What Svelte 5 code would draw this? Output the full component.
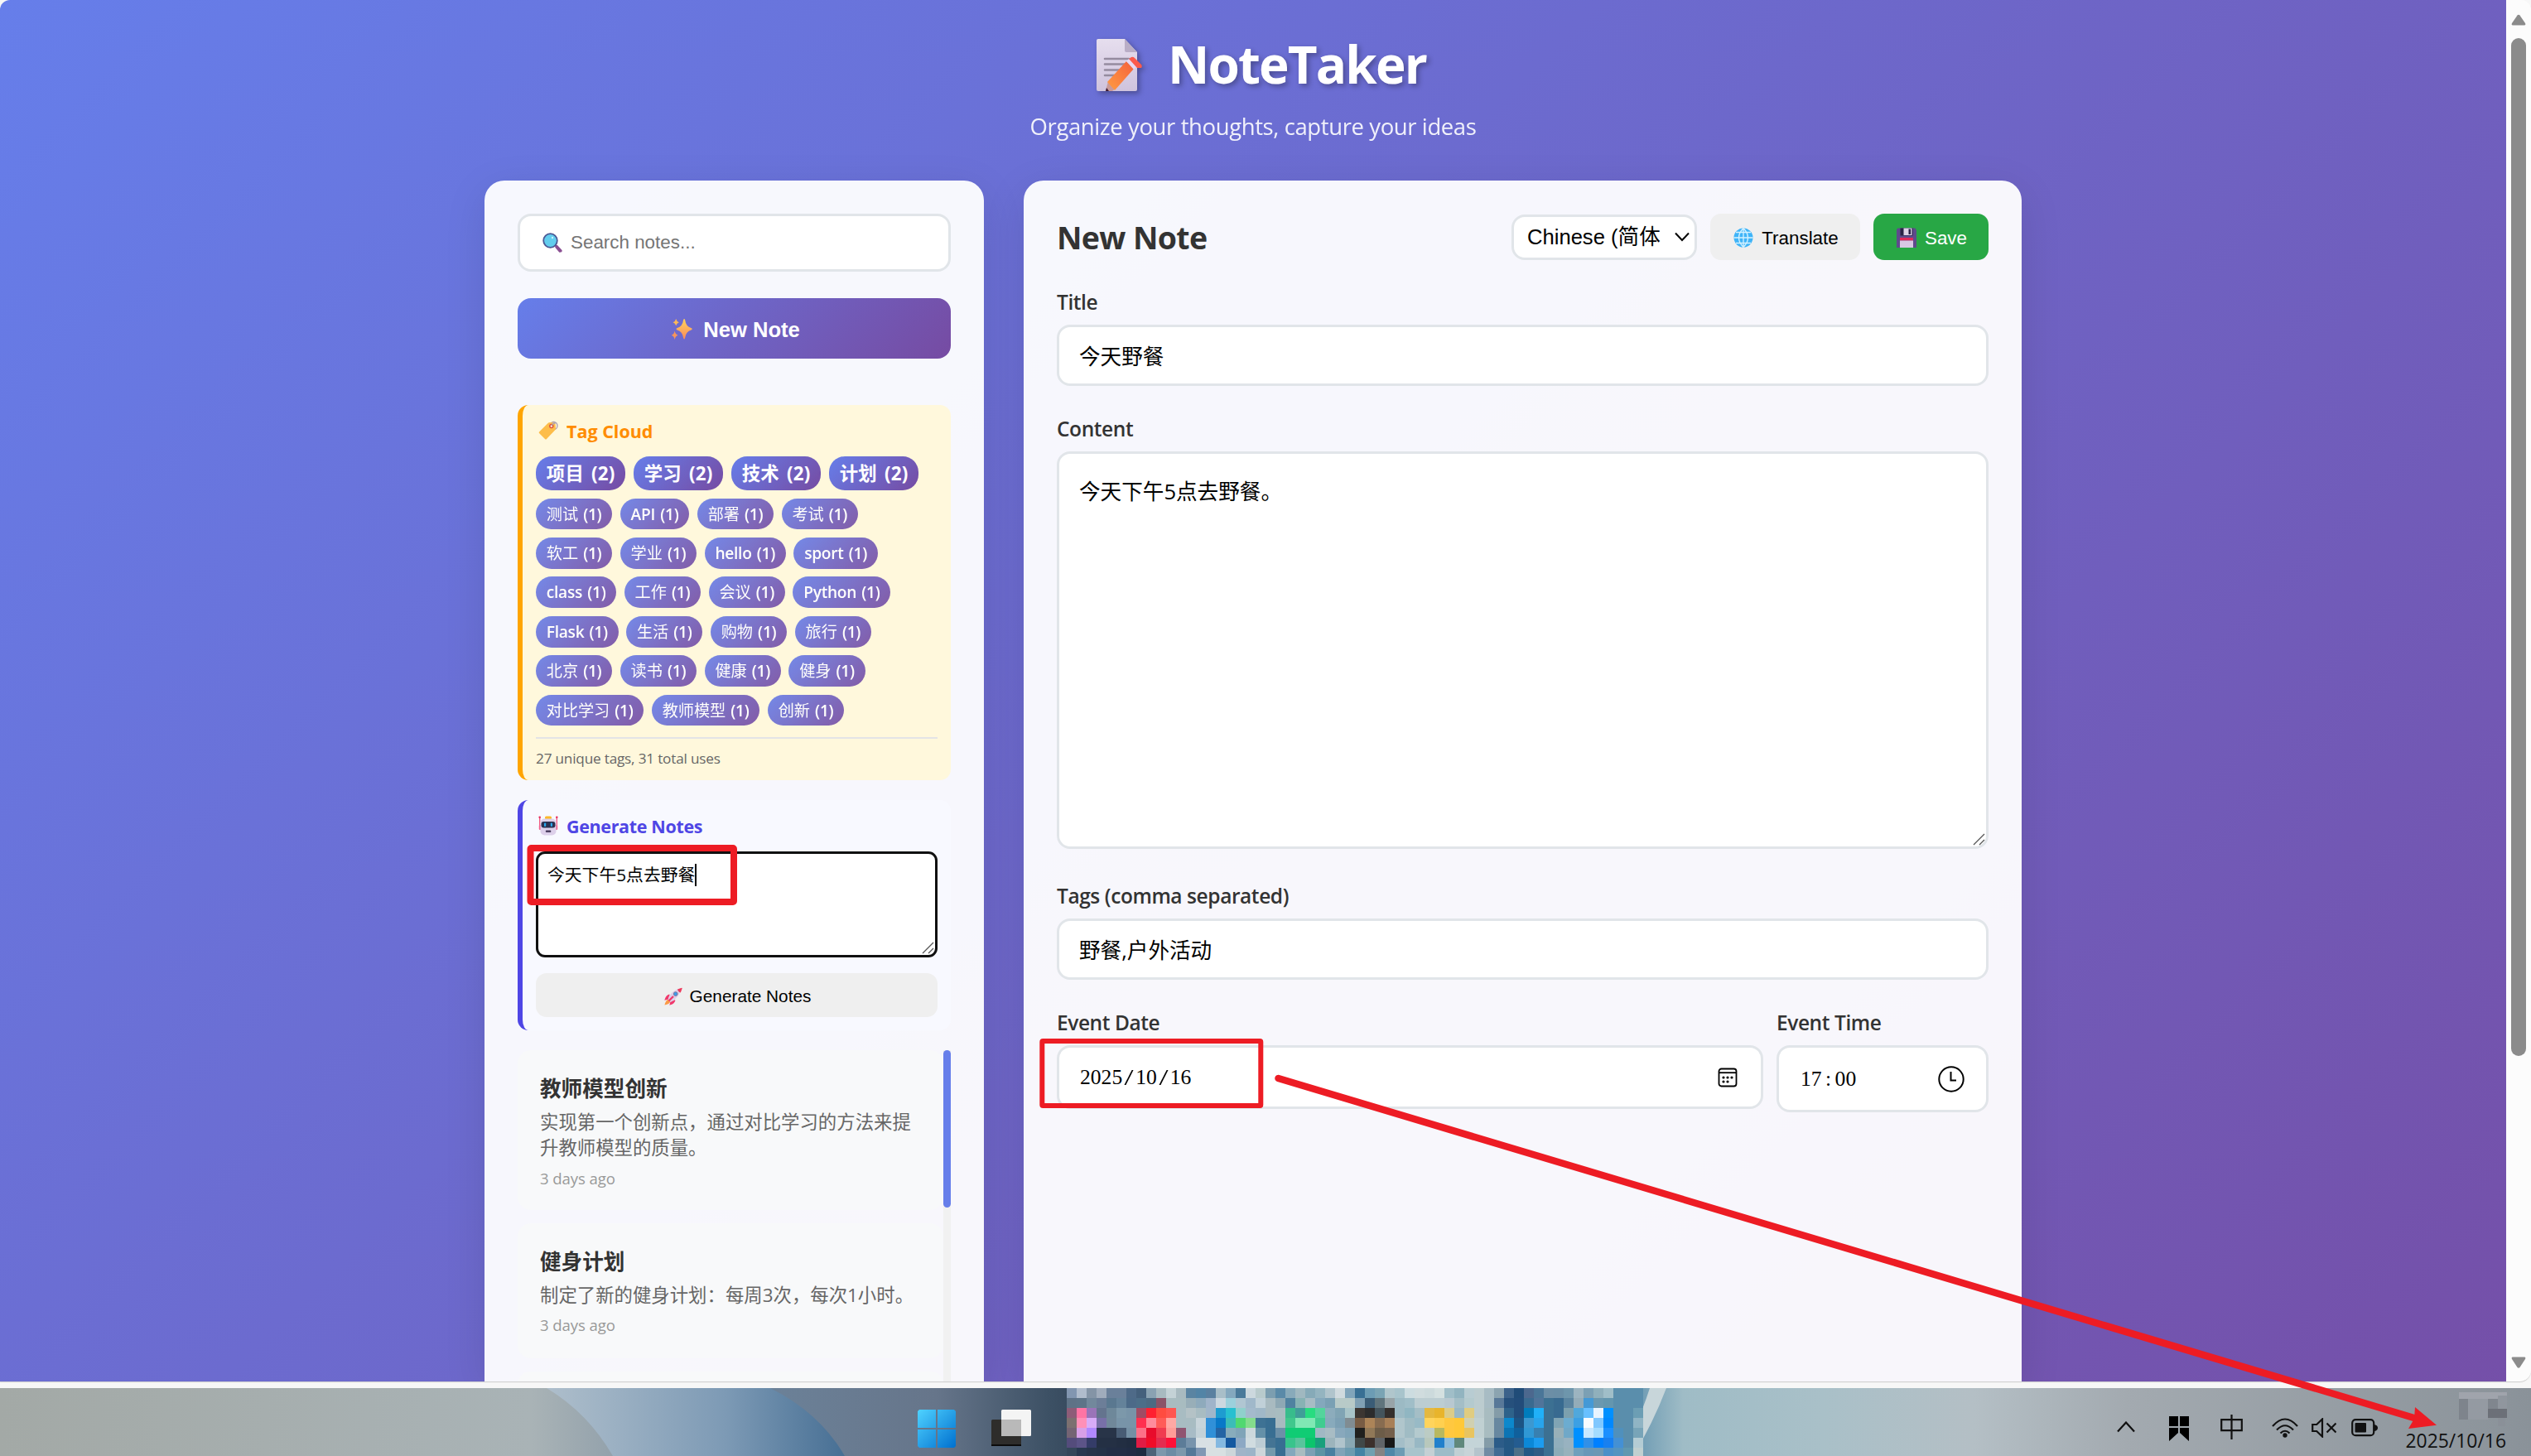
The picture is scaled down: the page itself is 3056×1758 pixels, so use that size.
<script>
  const bigTags = ['项目', '学习', '技术', '计划'];
  const smallTags = [
    '测试', 'API', '部署', '考试', '软工', '学业', 'hello', 'sport', 'class', '工作', '会议', 'Python',
    'Flask', '生活', '购物', '旅行', '北京', '读书', '健康', '健身', '对比学习', '教师模型', '创新'
  ];
  const notes = [
    { title: '教师模型创新', lines: ['实现第一个创新点，通过对比学习的方法来提', '升教师模型的质量。'], when: '3 days ago' },
    { title: '健身计划', lines: ['制定了新的健身计划：每周3次，每次1小时。'], when: '3 days ago' }
  ];

  // Pixelated strip of pinned taskbar apps, one colour per 12px cell.
  const mosaic = [
    '8296b0 b0bccc 8494a6 a0acbc 6a809a 6a809a 4e6a88 44607c 8aa2b2 a8bac0 c4d2d6 a8bac0 5a84a2 5284a6 5a80a0 a8bec8 84a8be 4a7a9a ccd8de b8cacc 7c9eb0 5a8aa8 88aaba a0b8c0 86aab8 94b4c0 b0c4cc d0dade 80a4ba 386f94 6c9cb4 7aa4b4 b0c6cc a8c4cc ccdce0 d0dcde ccdadc d4e0e0 a0bec8 92b4c0 b8ccd2 bccccf a8bcc4 8ca4b0 3c628a 204c78 4c688e 4a7698 6c8ea6 6a8ea6 6e96ac 9cb4c0 7ca0b4 90b0bc a0bec8 5a8eac 5a8eac 5a8eac',
    '5e7286 5e7488 72889c 6c7e98 5a7890 64829a 4c6a88 4c6e88 4c6a82 8a5468 a8bcc0 a8bcc0 98aeb8 8eaabc a0b4ca ccd8e0 9cd0dc b0c6d2 a0b8ca c0d0d8 a8bac0 8ea8b4 5082a0 88b2b4 a8bcc4 84a8bc 7aa0b4 b8cac8 b8cac8 80a0b4 3a5c76 60747c 98a4a8 9cbac4 a0bec8 bccdd2 bccdd2 bccdd2 b8c8d0 a4bec6 b4cace bccccf a8bcc4 587898 26507c 224c7a 3a6a90 50749a 3c7092 386a90 5a84a0 94acb8 4499d6 6a98b0 6496ae 5a8eac 5a8eac 5a8eac',
    '8e5c78 ff74a4 9a74b8 64748e 6e889a 7c98aa 7894a8 a04c64 ff2030 ff4c40 ff5650 a8bcc2 b4c2c6 a8bcc2 a0b6ca 1e9cd0 28c0d0 90d0cc a4bacc a0b8c8 a8bac0 a8bcc0 38bc8c 409e98 28dc80 54d49c 8cacbc 80a4b4 a8c4c8 3c3632 2c2c2c 44545c 342f2c 9cbac4 90b6c2 a4bec6 e4b840 e8b42c dccc88 9ab8c4 e0cc80 bccccf a8bcc0 849ca8 2e628a 224c7a 007cbc 20b0f8 3c7092 386a90 7ca0ae 50a8dc 68c0ff e8f4ff 0090ff 5a8eac 5a8eac 6c9eb4',
    '7c7070 ff90b8 d8acf8 7870a8 70889a 7894a8 7894a8 ff3050 ff8c9c ff5c58 ffa8a4 a8bcc2 a8bcc2 c8d4da 3090d8 0878c8 3cbcb8 50d870 84dc8c 3e7294 386e92 a8bac0 40c88c 80e8b4 80e8b4 40cc90 88aabc 7ca0b4 808c92 785c44 ac8458 886c50 a88058 b0c6cc a0bcc4 98bac6 ffd45c ffd050 ffc840 ffc838 d0d0b0 c0d0d2 a8bcc0 6888a0 0c88cc 1c5484 3c98d0 28a4ec 3c7092 80a4b4 6cacd0 3ca0e4 f8fcff 80c8ff 0088ff 5a8eac 5a8eac 90b4c4',
    '746474 d8a0e8 b088ff 283448 283448 485c74 7490a4 fc7088 e80c2c f03c50 ff9c98 905470 a8bcc6 c4d2d8 3090d8 2464a4 88acbc 80a4b8 ccd8dc 6490a8 386e92 6c90a8 10cc74 10cc74 10cc74 a0b8c4 a8bcc4 88a8bc 80a4b8 20201e 907858 6c5c48 74604c b0c6cc a0bcc4 b4cace bcccc4 b8b860 ffc840 ffc838 e8c460 c0d0d2 a8bcc0 6888a0 0c74b4 10609c 3098d4 3880b0 3c7092 98b0b8 70a8c8 0090ff c8e8ff a4dcff 1c90ff 5090bc 5a8eac 78a4b8',
    '544c7c 5c5488 343c68 243044 243044 222e42 202c40 e01c44 f00c28 e42c50 ff1038 5c7c98 7894ac d8e0e4 d8e0e4 84b8e0 1458a0 8ca8c4 d0dce0 bcccd4 447494 386e92 38c48c 58c49c 0cc46c 18a07c 9cb4bc b0c4cc 88a8b4 404848 3c302c 606468 181818 a4bec8 b0c6cc 98b8c4 b8c8bc 2080cc 8cbcdc 60887c c4d4d8 c4d4d8 849ca8 2c5c88 245884 245c90 0c88d8 1c9cf0 3c7092 90aebc 98b2c0 0090ff 3090e8 0080ff 1880f0 4490d4 5a8eac b4ccd4',
    '34465a 283850 26344a 243248 222e46 222e46 202c44 1c2c40 4c6478 7c98ac 6c8ca4 7c98ac 547898 8098b4 d8e0e2 d8e0e2 ccd6da a0b4c8 9cb4c8 ccd6da 749aac 386e92 84a8bc a8bcc0 7ca0b4 5c94a4 4880a0 80a4b8 6c9cb0 4484a4 70a0b0 848484 5088a8 6c9cb4 a8c4cc a8c4cc c4d0d4 9cbcc8 9cbcc8 c0d0d4 c8d4d8 b4c4cc 708ca4 406c94 245884 4c7088 245884 305c84 3c7092 8cacb8 98b2bc 70a0bc 6898b8 6c98b4 4c90c8 5494c0 6098b0 c0d0d0'
  ].map((row) => row.split(' '));
</script>

<div class="screen">
  <div class="browser">
    <main class="page">
      <header class="masthead">
        <h1>
          <svg class="memo" viewBox="0 0 88 80">
            <defs>
              <linearGradient id="paper" x1="0" y1="0" x2="0" y2="1"><stop offset="0" stop-color="#e6deee" /><stop offset="1" stop-color="#cfc3dd" /></linearGradient>
              <linearGradient id="pencil" x1="1" y1="0" x2="0" y2="1"><stop offset="0" stop-color="#f4603c" /><stop offset="1" stop-color="#ff9c42" /></linearGradient>
            </defs>
            <path d="M22 10h32l15 16v45a2 2 0 0 1-2 2H22a2 2 0 0 1-2-2V12a2 2 0 0 1 2-2z" fill="url(#paper)" />
            <path d="M54 10l15 16H56a2 2 0 0 1-2-2z" fill="#b9adc6" />
            <path d="M30 34h29M30 40.500h29M30 47.500h21M30 54h14" stroke="#958b9f" stroke-width="2.600" stroke-linecap="round" />
            <path d="M31 73l3-12 9 9-4 3z" fill="#c99a98" />
            <path d="M31 73l1-4 3 4z" fill="#3c1b35" />
            <path d="M33 62l23-25 9 9-23 26z" fill="url(#pencil)" />
            <path d="M56 37l3-3 9 9-3 4z" fill="#e6d9f2" />
            <path d="M59 34l3-2q2-1 4 1l8 8q1.500 2 0 4l-5 0z" fill="#fb5a4c" />
          </svg>
          <span>NoteTaker</span>
        </h1>
        <p>Organize your thoughts, capture your ideas</p>
      </header>

      <div class="layout">
        <aside class="panel sidebar">
          <div class="search">
            <svg class="emo" viewBox="0 0 24 24">
              <path d="M15 14l3 1 5.500 6q.7 2-1.200 2.600l-2 .2-5-6z" fill="#8a4f92" />
              <circle cx="9.500" cy="9.500" r="8.300" fill="#62cdee" stroke="#4b5794" stroke-width="1.800" />
              <circle cx="12" cy="6" r="1.200" fill="#c8f4ff" />
            </svg>
            <span>Search notes...</span>
          </div>

          <button class="new-note">
            <svg class="emo" viewBox="0 0 24 24">
              <defs><linearGradient id="spark" x1="0" y1="0" x2="0" y2="1"><stop offset="0" stop-color="#ffd35c" /><stop offset="1" stop-color="#f98b5a" /></linearGradient></defs>
              <path d="M15 0q.8 0 1 1.500 1 7.500 7 9 1.200.4 1.200 1.200t-1.200 1.200q-6 1.500-7 9-.2 1.500-1 1.500t-1-1.500q-1-7.500-7-9-1.200-.4-1.200-1.200t1.200-1.200q6-1.500 7-9Q14.200 0 15 0z" fill="url(#spark)" />
              <path d="M5.500 0q.8 3.300 3.500 4-2.700.8-3.500 4Q4.700 4.800 2 4q2.700-.8 3.500-4z" fill="#fbb85a" />
              <path d="M4 14q.8 4 3.800 5-3 1-3.800 5-.8-4-3.800-5 3-1 3.800-5z" fill="#f7955c" />
            </svg>
            <span>New Note</span>
          </button>

          <section class="card cloud">
            <h3>
              <svg class="emo" viewBox="0 0 24 24">
                <circle cx="18.500" cy="6" r="4.500" fill="none" stroke="#a79cb0" stroke-width="1.300" />
                <path d="M1 13.500L11.500 3q1-1 2.500-1l5 .5q1.500.2 1.600 1.800l.4 4.700q0 1.500-1 2.500L10 22q-1 1-2 0l-7-7q-.7-.8 0-1.500z" fill="#fdbd4a" />
                <circle cx="15.800" cy="6.500" r="2" fill="#fff6dc" stroke="#e0543c" stroke-width="1.500" />
                <path d="M16 6q2-4 5-3" fill="none" stroke="#a79cb0" stroke-width="1.200" />
              </svg>
              <span>Tag Cloud</span>
            </h3>
            <div class="tags">
              {#each bigTags as t}<span class="tag big">{t} (2)</span>{/each}
              {#each smallTags as t}<span class="tag"><span class:light={!/[a-z]/i.test(t)}>{t}</span> (1)</span>{/each}
            </div>
            <p class="stats">27 unique tags, 31 total uses</p>
          </section>

          <section class="card generate">
            <h3>
              <svg class="emo" viewBox="0 0 24 24">
                <path d="M1.700 2v14M22.300 2v14" stroke="#f0527c" stroke-width="1.300" />
                <circle cx="1.700" cy="1.800" r="1.300" fill="#e8305c" /><circle cx="22.300" cy="1.800" r="1.300" fill="#e8305c" />
                <rect x="0.800" y="11" width="22.400" height="6" rx="1" fill="#f2618c" />
                <rect x="8" y="0.500" width="8" height="4" rx="1.500" fill="#fbb92c" />
                <rect x="2.500" y="3.500" width="19" height="20" rx="5" fill="#ddd0ea" />
                <rect x="3.500" y="7" width="17" height="7.500" rx="3" fill="#2c3050" />
                <rect x="7" y="8.500" width="2.200" height="4.500" rx="1" fill="#28a9f0" /><rect x="14.800" y="8.500" width="2.200" height="4.500" rx="1" fill="#28a9f0" />
                <rect x="8.800" y="17.500" width="6.500" height="2.500" rx="1" fill="#4c3f60" />
              </svg>
              <span>Generate Notes</span>
            </h3>
            <div class="prompt">
              <span>今天下午5点去野餐</span><i class="caret"></i>
              <svg class="grip" viewBox="0 0 15 15"><path d="M1 14L14 1M8 14l6-6" /></svg>
            </div>
            <button class="plain">
              <svg class="emo" viewBox="0 0 24 24">
                <path d="M7 10q-4 1-5.500 6l4-1M14 17q-1 4-6 5.500l1-4" fill="#f0386c" stroke="#f0386c" stroke-width="1.500" />
                <path d="M5 16l3 3q-1 3-7.500 4.500Q1.500 18 5 16z" fill="#fb9a48" />
                <path d="M5 16Q9 4 22.500 1.200 20 14 8.500 19.500z" fill="#dccfe8" />
                <path d="M17.500 2.800l5.500-2q.8 0 .6.800l-2 5.500q-3.500-.8-4.100-4.300z" fill="#ee3a5c" />
                <circle cx="15" cy="8.800" r="2.600" fill="#3d9cea" stroke="#7a7394" stroke-width="1" />
                <path d="M6 18l6-6" stroke="#f0386c" stroke-width="2.500" />
              </svg>
              <span>Generate Notes</span>
            </button>
          </section>

          <div class="list">
            <div class="items">
              {#each notes as n}
                <article>
                  <h4>{n.title}</h4>
                  <p>{#each n.lines as l}<span>{l}</span>{/each}</p>
                  <time>{n.when}</time>
                </article>
              {/each}
              <article class="partial"></article>
            </div>
            <div class="track"><div class="thumb"></div></div>
          </div>
        </aside>

        <section class="panel editor">
          <div class="toolbar">
            <h2>New Note</h2>
            <div class="select">
              <span>Chinese (简体</span>
              <svg viewBox="0 0 18 12"><path d="M1 1.500l8 8.500 8-8.500" fill="none" stroke="#000" stroke-width="2" /></svg>
            </div>
            <button class="translate">
              <svg class="emo" viewBox="0 0 24 24">
                <circle cx="12" cy="12" r="11.500" fill="#3fb4f8" />
                <path d="M12 .5v23M.5 12h23M3 5.500h18M3 18.500h18M12 .5Q1 12 12 23.500M12 .5q11 11.500 0 23" fill="none" stroke="#d5f2ff" stroke-width="1.300" />
              </svg>
              <span>Translate</span>
            </button>
            <button class="save">
              <svg class="emo" viewBox="0 0 24 24">
                <path d="M1.500.5h21L24 3v21H0V2z" fill="#5e4a8c" />
                <rect x="4.500" y="0.500" width="15" height="9" fill="#2a2346" />
                <rect x="8.500" y="0.500" width="10" height="8.500" fill="#dcd2e6" />
                <rect x="14.500" y="1.500" width="2.600" height="6.500" fill="#2a2346" />
                <rect x="4" y="12" width="16" height="3.500" fill="#e0285a" />
                <rect x="4" y="15.500" width="16" height="8.500" fill="#d8c8e4" />
              </svg>
              <span>Save</span>
            </button>
          </div>

          <div class="field"><span class="label">Title</span><div class="input">今天野餐</div></div>
          <div class="field">
            <span class="label">Content</span>
            <div class="input area">今天下午5点去野餐。<svg class="grip" viewBox="0 0 15 15"><path d="M1 14L14 1M8 14l6-6" /></svg></div>
          </div>
          <div class="field"><span class="label">Tags (comma separated)</span><div class="input">野餐,户外活动</div></div>
          <div class="when">
            <div class="field">
              <span class="label">Event Date</span>
              <div class="input date">
                <span class="digits">2025<b class="slash">/</b>10<b class="slash">/</b>16</span>
                <svg class="cal" viewBox="0 0 24 24">
                  <rect x="1.500" y="1.500" width="21" height="21" rx="3" fill="none" stroke="#000" stroke-width="1.800" />
                  <path d="M2 6.200h20" stroke="#000" stroke-width="1.800" />
                  {#each [[7, 12], [12, 12], [17, 12], [7, 17], [12, 17]] as [x, y]}<circle cx={x} cy={y} r="1.600" />{/each}
                </svg>
              </div>
            </div>
            <div class="field">
              <span class="label">Event Time</span>
              <div class="input time">
                <span class="digits">17<b>:</b>00</span>
                <svg class="clock" viewBox="0 0 32 32"><circle cx="16" cy="16" r="14.700" /><path d="M15.500 7v10.500H22" /></svg>
              </div>
            </div>
          </div>
        </section>
      </div>
    </main>

    <div class="scrollbar">
      <svg viewBox="0 0 18 14"><path d="M7.500 1.500Q9 0 10.500 1.500L17 11q1 2.500-1 2.500H2Q0 13.500 1 11z" /></svg>
      <div class="handle"></div>
      <svg viewBox="0 0 18 14"><path d="M7.500 13Q9 14.500 10.500 13L17 3q1-2.500-1-2.500H2Q0 .5 1 3z" /></svg>
    </div>
  </div>
  <div class="strip"></div>

  <footer class="taskbar">
    <svg class="wallpaper" viewBox="0 0 3056 82" preserveAspectRatio="none">
      <defs>
        <linearGradient id="wall" x1="0" x2="3056" y1="0" y2="0" gradientUnits="userSpaceOnUse">
          <stop offset="0" stop-color="#a3a9a6" /><stop offset="0.210" stop-color="#a9b3b6" /><stop offset="0.300" stop-color="#6c8299" />
          <stop offset="0.370" stop-color="#66758a" /><stop offset="0.415" stop-color="#3c5064" /><stop offset="0.430" stop-color="#34465a" />
          <stop offset="0.640" stop-color="#5a8eac" /><stop offset="0.665" stop-color="#9fbcc6" /><stop offset="0.720" stop-color="#a9c0c8" />
          <stop offset="0.780" stop-color="#b4bfc5" /><stop offset="0.840" stop-color="#a3aab0" /><stop offset="1" stop-color="#8a9299" />
        </linearGradient>
        <linearGradient id="petal" x1="0" x2="1" y1="0" y2="0"><stop offset="0" stop-color="#aebecb" /><stop offset="0.600" stop-color="#7d9ab5" /><stop offset="1" stop-color="#476f94" /></linearGradient>
      </defs>
      <rect width="3056" height="82" fill="url(#wall)" />
      <path d="M660 0H930Q990 30 1020 82H740Q710 30 660 0z" fill="url(#petal)" />
      <path d="M1992 0q-16 50-40 82h20q24-40 40-82z" fill="#c8d6da" />
    </svg>
    <div class="apps">
      <svg class="start" viewBox="0 0 46 46">
        <defs><linearGradient id="win" x1="0" y1="0" x2="46" y2="46" gradientUnits="userSpaceOnUse"><stop offset="0" stop-color="#4fd2ff" /><stop offset="1" stop-color="#0070cf" /></linearGradient></defs>
        <path d="M2 0h20v22H0V2zM24 0h20l2 2v20H24zM0 24h22v22H2l-2-2zM24 24h22v20l-2 2H24z" fill="url(#win)" />
      </svg>
      <svg class="view" viewBox="0 0 48 46">
        <rect x="0" y="12" width="36" height="32" rx="1.500" fill="#2e2d2b" /><rect x="0" y="42" width="36" height="2" fill="#0c0c0c" />
        <rect x="12" y="0" width="36" height="32" rx="1.500" fill="#f4f4f4" />
        <rect x="12" y="12" width="24" height="20" fill="#b9b9b9" />
      </svg>
      <svg class="mosaic" viewBox="0 0 696 82" shape-rendering="crispEdges">
        {#each mosaic as row, y}
          {#each row as c, x}<rect x={x * 12} y={y * 12} width="12" height="12" fill={'#' + c} />{/each}
        {/each}
      </svg>
    </div>
    <div class="tray">
      <svg class="up" viewBox="0 0 22 14"><path d="M1 12.500L11 1.500l10 11" /></svg>
      <svg class="mark" viewBox="0 0 24 30"><path d="M0 0h11v12H0zM13 0h11v12H13zM0 14h11v6L0 30zM13 14h11v16L13 20z" /></svg>
      <svg class="ime" viewBox="0 0 27 30"><path d="M1.200 6.200h24.600v13H1.200zM13.500 0v30" /></svg>
      <svg class="wifi" viewBox="0 0 32 24"><path d="M1 10Q16-7 31 10M6 14.500q10-10.500 20 0M10.500 18.500q5.500-5.500 11 0" /><circle cx="16" cy="21" r="2.700" /></svg>
      <svg class="mute" viewBox="0 0 30 24"><path d="M1.200 8h5L13 1.500v21L6.200 16h-5zM18.500 6.500l11 11M29.500 6.500l-11 11" /></svg>
      <svg class="battery" viewBox="0 0 32 22"><rect x="1.200" y="1.200" width="26" height="19" rx="4" /><rect class="solid" x="4.500" y="5" width="13.500" height="11.500" rx="1" /><path class="solid" d="M28 7q4 1 4 4t-4 4z" /></svg>
      <div class="clockbox">
        <svg viewBox="0 0 60 44" shape-rendering="crispEdges">
          <rect width="60" height="10" fill="#a0a4ac" /><rect y="8" width="12" height="26" fill="#7e848c" /><rect x="12" y="8" width="24" height="26" fill="#949aa2" />
          <rect x="36" y="8" width="12" height="14" fill="#80868e" /><rect x="48" y="4" width="12" height="18" fill="#90969e" />
          <rect x="36" y="20" width="24" height="12" fill="#6c7078" /><rect x="48" y="32" width="10" height="10" fill="#8a9098" />
        </svg>
        <span>2025/10/16</span>
      </div>
    </div>
  </footer>

  <svg class="marks" viewBox="0 0 3056 1758">
    <rect x="640.500" y="1024" width="245.500" height="65" rx="1" stroke-width="8" />
    <rect x="1258.300" y="1257" width="264" height="78" rx="1" stroke-width="6" />
    <path d="M1543.500 1302L2918 1713" stroke-width="8.500" stroke-linecap="round" />
    <path class="head" d="M2942 1720.700L2916 1699l-1 14-7 12z" />
  </svg>
</div>

<style>
  :global(body) { margin: 0; }
  .screen, .screen :global(*) { box-sizing: border-box; }
  .screen {
    position: relative; width: 3056px; height: 1758px; overflow: hidden; display: flex; flex-direction: column;
    background: #f7f7f7; font-family: 'Open Sans', 'Noto Sans CJK SC', sans-serif; color: #333;
  }
  h1, h2, h3, h4, p { margin: 0; }
  button { border: 0; padding: 0; font-family: 'Liberation Sans', sans-serif; display: flex; align-items: center; justify-content: center; }
  span { white-space: nowrap; }

  .browser { display: flex; height: 1668px; border-radius: 12px 12px 14px 0; overflow: hidden; background: #fcfcfc; box-shadow: 0 1px 1px #ccc; flex: none; }
  .page { width: 3026px; height: 1668px; overflow: hidden; background: linear-gradient(135deg, #667eea 0%, #764ba2 100%) 0 0 / 100% 2130px no-repeat; }
  .masthead { height: 218px; padding-top: 37px; display: flex; flex-direction: column; align-items: center; color: #fff; }
  h1 { display: flex; align-items: center; gap: 18px; height: 80px; font-size: 62px; font-weight: 700; line-height: 80px; letter-spacing: -1.900px; text-shadow: 3px 3px 6px rgba(0, 0, 0, 0.3); }
  .memo { width: 88px; height: 80px; filter: drop-shadow(3px 3px 3px rgba(0, 0, 0, 0.3)); }
  .masthead p { margin-top: 17px; font-size: 27.500px; line-height: 38px; opacity: 0.9; letter-spacing: -0.400px; }

  .layout { display: grid; grid-template-columns: 603px 1205px; gap: 48px; margin-left: 585px; height: 1450px; }
  .panel { background: rgba(255, 255, 255, 0.95); border-radius: 24px 24px 0 0; padding: 40px 40px 0; box-shadow: 0 13px 51px rgba(0, 0, 0, 0.1); min-width: 0; }

  .sidebar { display: flex; flex-direction: column; }
  .emo { width: 24px; height: 24px; flex: none; }
  .search { height: 70px; border: 3px solid #e1e5e9; border-radius: 16px; background: #fff; display: flex; align-items: center; padding-left: 27px; gap: 10px; font: 22.400px 'Liberation Sans', sans-serif; color: #757575; flex: none; }
  .new-note { margin-top: 32px; height: 73px; border-radius: 16px; background: linear-gradient(135deg, #667eea 0%, #764ba2 100%); color: #fff; font-size: 25.600px; font-weight: 700; gap: 13px; flex: none; padding: 4px 0 0 3px; }
  .new-note .emo { width: 26px; height: 25px; margin-top: -3px; }

  .card { border-left: 6px solid; border-radius: 13px; padding: 16px 16px 0; flex: none; }
  .card h3 { display: flex; align-items: center; gap: 10px; height: 30px; padding-left: 3px; font-size: 21.500px; font-weight: 700; letter-spacing: -0.350px; }
  .cloud { margin-top: 56px; height: 453px; background: #fff8dc; border-color: #ffa500; }
  .cloud h3 { color: #ff8c00; letter-spacing: 0; }
  .tags { margin-top: 16px; padding-right: 8px; display: flex; flex-wrap: wrap; gap: 9.600px; height: 339px; align-content: flex-start; }
  .tag { height: 37.800px; border-radius: 19px; padding: 0 12.800px; background: linear-gradient(135deg, #667eea 0%, #764ba2 100%); color: #fff; font-size: 19.200px; line-height: 37px; font-weight: 600; opacity: 0.9; letter-spacing: -0.300px; word-spacing: 1.500px; }
  .tag .light { font-weight: 400; letter-spacing: -0.100px; }
  .tag.big { height: 41px; font-size: 22.400px; line-height: 41px; font-weight: 700; opacity: 1; letter-spacing: 0.200px; word-spacing: 3px; }
  .stats { padding-top: 11px; border-top: 2px solid #e3e4e6; font-size: 17.200px; line-height: 26px; color: #666; letter-spacing: -0.200px; }

  .generate { margin-top: 24px; height: 278px; background: #f8f9ff; border-color: #4f46e5; }
  .generate h3 { color: #4f46e5; }
  .prompt { position: relative; margin-top: 16px; height: 128px; background: #fff; border: 3px solid #101010; border-radius: 11px; padding: 11px 0 0 11px; display: flex; align-items: flex-start; font-size: 20.800px; line-height: 28px; color: #000; }
  .caret { width: 2px; height: 27px; margin-top: 1px; background: #000; }
  .grip { position: absolute; right: 1px; bottom: 1px; width: 15px; height: 15px; fill: none; stroke: #555; stroke-width: 1.300; }
  .plain { width: 100%; margin-top: 19px; height: 53px; border-radius: 13px; background: #efefef; color: #000; font-size: 20.800px; gap: 9px; padding: 2px 0 0 2px; }
  .plain .emo { width: 22px; height: 22px; }

  .list { margin-top: 24px; height: 400px; display: flex; flex: none; }
  .items { flex: 1; display: flex; flex-direction: column; gap: 16px; }
  article { background: #f8f9fa; border-radius: 16px; padding: 28px 27px 0; flex: none; height: 193px; }
  article:nth-child(2) { height: 163px; }
  article.partial { height: 30px; padding: 0; }
  h4 { font-size: 25.600px; line-height: 38px; font-weight: 700; color: #333; }
  article p { margin-top: 5px; font-size: 22.400px; line-height: 31.400px; color: #666; }
  article p span { display: block; }
  time { display: block; margin-top: 8px; font-size: 18.600px; line-height: 26px; color: #999; letter-spacing: -0.100px; }
  .track { width: 9px; background: #f1f1f1; }
  .thumb { height: 190px; border-radius: 5px; background: #667eea; }

  .toolbar { display: flex; align-items: center; height: 56px; margin-bottom: 34px; }
  h2 { flex: 1; font-size: 37.500px; line-height: 56px; padding-top: 2px; font-weight: 700; letter-spacing: -0.650px; }
  .select { width: 224px; height: 55px; border: 3px solid #e1e5e9; border-radius: 16px; background: #fff; display: flex; align-items: center; justify-content: space-between; padding: 0 6px 0 16px; font-family: 'Liberation Sans', 'Noto Sans CJK SC', sans-serif; font-size: 25.600px; line-height: 40px; color: #000; }
  .select svg { width: 18px; height: 12px; }
  .translate, .save { height: 56px; border-radius: 13px; font-size: 22.400px; gap: 10px; padding: 3px 0 0 2px; }
  .translate .emo, .save .emo { margin-top: -2px; }
  .translate { width: 181px; margin: 0 16px; background: #efefef; color: #000; }
  .save { width: 139px; background: #28a745; color: #fff; }

  .field { display: flex; flex-direction: column; margin-bottom: 35px; }
  .label { height: 34px; margin-bottom: 10px; font-size: 24.500px; line-height: 34px; font-weight: 600; letter-spacing: -0.420px; }
  .input { position: relative; height: 74px; border: 3px solid #e1e5e9; border-radius: 16px; background: #fff; display: flex; align-items: center; padding: 0 24px; font-size: 25.600px; color: #000; }
  .input.area { height: 480px; align-items: flex-start; padding-top: 27px; line-height: 38px; margin-bottom: 5px; }
  .when { display: grid; grid-template-columns: 853px 256px; gap: 16px; align-items: start; }
  .input.date { height: 77px; justify-content: space-between; padding: 0 28px 0 25px; }
  .input.time { height: 81px; justify-content: space-between; padding: 0 26px; }
  .digits { font-family: 'Liberation Serif', serif; font-size: 25.600px; }
  .digits b { display: inline-block; width: 16px; text-align: center; font-weight: 400; }
  .digits .slash { transform: scale(1.550, 1.100); }
  .cal { width: 24px; height: 24px; }
  .clock { width: 32px; height: 32px; fill: none; stroke: #000; stroke-width: 2; }

  .scrollbar { width: 30px; height: 1668px; background: #fcfcfc; display: flex; flex-direction: column; align-items: center; padding: 17px 0 16px; fill: #8b8b8b; }
  .scrollbar svg { width: 18px; height: 14px; }
  .handle { width: 18px; height: 1229px; margin: 15px 0 auto; border-radius: 9px; background: #8b8b8b; }
  .strip { height: 8px; flex: none; }

  .taskbar { position: relative; height: 82px; display: flex; justify-content: space-between; }
  .wallpaper { position: absolute; inset: 0; width: 3056px; height: 82px; }
  .apps { position: relative; display: flex; align-items: flex-start; padding-left: 1108px; }
  .start { width: 46px; height: 46px; margin-top: 26px; }
  .view { width: 48px; height: 46px; margin: 26px 43px 0; }
  .mosaic { width: 696px; height: 82px; }
  .tray { position: relative; display: flex; align-items: flex-start; padding-right: 28px; }
  .tray svg { fill: none; stroke: #111; stroke-width: 2.200; flex: none; }
  .up { width: 22px; height: 14px; margin: 40px 41px 0 0; }
  .tray .mark { width: 24px; height: 30px; margin: 34px 38px 0 0; fill: #000; stroke: none; }
  .ime { width: 27px; height: 30px; margin: 32px 35px 0 0; }
  .wifi { width: 32px; height: 24px; margin: 36px 16px 0 0; }
  .tray .wifi circle, .tray .solid { fill: #111; stroke: none; }
  .mute { width: 30px; height: 24px; margin: 36px 18px 0 0; }
  .battery { width: 32px; height: 22px; margin: 37px 34px 0 0; }
  .clockbox { width: 123px; display: flex; flex-direction: column; align-items: flex-end; padding-top: 5px; }
  .tray .clockbox svg { width: 60px; height: 43px; stroke: none; }
  .clockbox span { font-size: 22.900px; line-height: 32px; color: #111; padding-right: 2px; }

  .marks { position: absolute; inset: 0; width: 3056px; height: 1758px; fill: none; stroke: #ed1c24; }
  .marks .head { fill: #ed1c24; stroke: none; }
</style>
